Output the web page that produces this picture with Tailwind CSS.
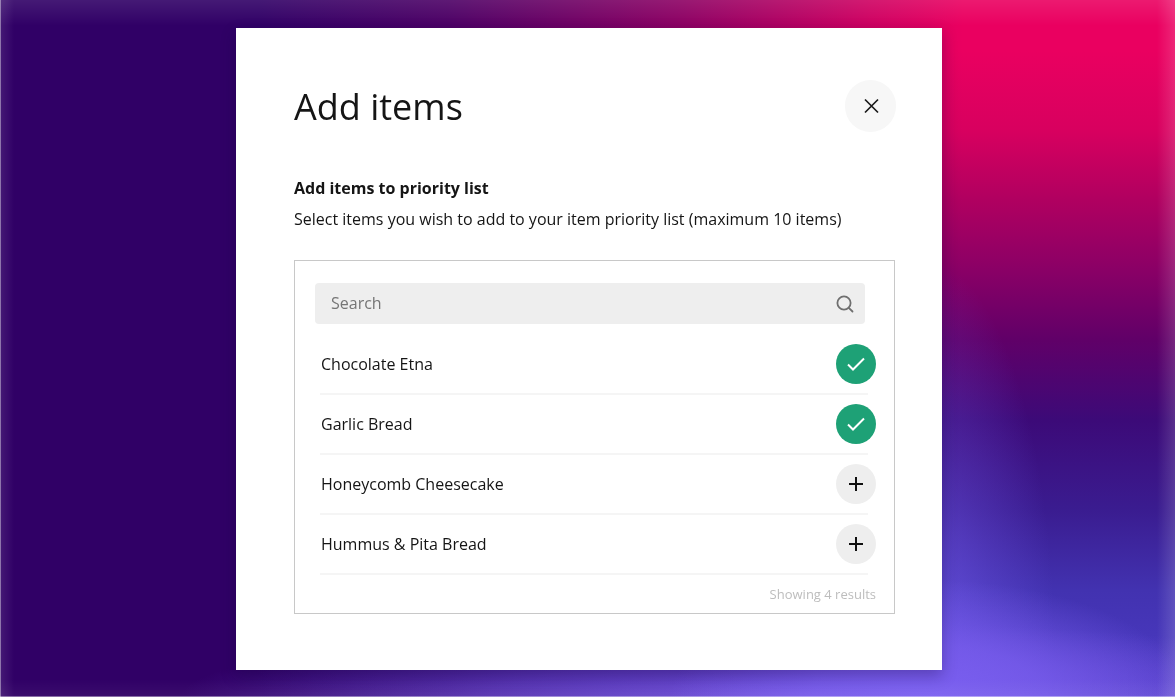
<!DOCTYPE html>
<html lang="en">
<head>
<meta charset="utf-8">
<title>Add items</title>
<script src="https://cdn.jsdelivr.net/npm/@tailwindcss/browser@4"></script>
</head>
<body class="m-0">
<div class="relative w-[1175px] h-[697px] overflow-hidden font-['Open_Sans','Noto_Sans',sans-serif] text-[#151515] bg-[#300066]">
  <div class="absolute inset-0 bg-[radial-gradient(ellipse_260px_120px_at_930px_700px,#7a5ff0_0%,rgba(122,95,240,.7)_45%,rgba(122,95,240,0)_100%),radial-gradient(ellipse_620px_75px_at_800px_697px,rgba(112,80,220,.95)_0%,rgba(112,80,220,.55)_50%,rgba(112,80,220,0)_100%),radial-gradient(ellipse_130px_400px_at_925px_660px,rgba(112,88,232,.75)_0%,rgba(112,88,232,.3)_55%,rgba(112,88,232,0)_100%),linear-gradient(90deg,#300066_0%,#300066_22%,rgba(48,0,102,.85)_38%,rgba(48,0,102,.5)_58%,rgba(48,0,102,.15)_74%,rgba(48,0,102,0)_82%,rgba(48,0,102,0)_100%),linear-gradient(180deg,#ea0060_0px,#ea0060_50px,#d8005f_130px,#b00060_200px,#8a0066_270px,#600068_340px,#3c0a78_420px,#3a1c90_510px,#4232b0_590px,#4c3cc6_697px)]"></div>
  <div class="absolute inset-x-0 top-0 h-[26px] bg-gradient-to-b from-white/10 to-transparent"></div>
  <div class="absolute inset-y-0 left-0 w-[14px] bg-gradient-to-r from-white/10 to-transparent"></div>
  <div class="absolute inset-y-0 right-0 w-[18px] bg-gradient-to-l from-white/15 to-transparent"></div>
  <div class="absolute inset-x-0 bottom-0 h-[18px] bg-gradient-to-t from-white/5 to-transparent"></div>
  <div class="absolute inset-y-0 left-0 w-px bg-white/40"></div>
  <div class="absolute inset-x-0 bottom-0 h-px bg-white/40"></div>

  <div class="absolute left-[236px] top-[28px] w-[706px] h-[642px] bg-white shadow-[0_6px_14px_rgba(20,0,60,.3)]">
    <div class="h-full pl-[58px] pr-[46px] pt-[52px] will-change-[opacity]">
      <div class="flex items-center justify-between h-[52px]">
        <h1 class="text-[36px] leading-[52px] font-normal m-0 translate-y-[1px]">Add items</h1>
        <button class="w-[51px] h-[52px] rounded-full bg-[#f7f7f7] flex items-center justify-center">
          <svg class="translate-x-[0.5px]" width="16" height="16" viewBox="0 0 16 16" fill="none" stroke="#1a1a1a" stroke-width="1.7"><path d="M1.5 1.5 14.5 14.5M14.5 1.5 1.5 14.5"/></svg>
        </button>
      </div>
      <h2 class="mt-[44px] text-[16px] leading-[24px] font-bold">Add items to priority list</h2>
      <p class="mt-[7px] text-[16px] leading-[24px]">Select items you wish to add to your item priority list (maximum 10 items)</p>
      <div class="mt-[29px] w-[601px] h-[354px] border border-[#c8c8c8] pt-[22px] pl-[20px] pr-[18px]">
        <div class="w-[550px] h-[41px] rounded bg-[#eeeeee] flex items-center justify-between pl-[16px] pr-[11px]">
          <span class="text-[16px] leading-[24px] -translate-y-[1px] text-[#757575]">Search</span>
          <svg width="18" height="18" viewBox="0 0 18 18" fill="none" stroke="#6f6f6f" stroke-width="1.8"><circle cx="8" cy="8" r="6.6"/><path d="M12.8 12.8 16.5 16.5" stroke-linecap="round"/></svg>
        </div>
        <ul class="mt-[11px] ml-[5px] w-[548px] list-none p-0">
          <li class="h-[60px] flex items-center border-b-2 border-[#f5f5f5] pl-px relative">
            <span class="text-[16px]">Chocolate Etna</span>
            <span class="absolute left-[516px] top-[9px] w-[40px] h-[40px] rounded-full bg-[#1ea176] flex items-center justify-center">
              <svg width="18" height="14" viewBox="0 0 18 14" fill="none" stroke="#fff" stroke-width="2"><path d="M1 7.5 6 12.5 17 1.5"/></svg>
            </span>
          </li>
          <li class="h-[60px] flex items-center border-b-2 border-[#f5f5f5] pl-px relative">
            <span class="text-[16px]">Garlic Bread</span>
            <span class="absolute left-[516px] top-[9px] w-[40px] h-[40px] rounded-full bg-[#1ea176] flex items-center justify-center">
              <svg width="18" height="14" viewBox="0 0 18 14" fill="none" stroke="#fff" stroke-width="2"><path d="M1 7.5 6 12.5 17 1.5"/></svg>
            </span>
          </li>
          <li class="h-[60px] flex items-center border-b-2 border-[#f5f5f5] pl-px relative">
            <span class="text-[16px]">Honeycomb Cheesecake</span>
            <span class="absolute left-[516px] top-[9px] w-[40px] h-[40px] rounded-full bg-[#eeeeee] flex items-center justify-center">
              <svg width="14" height="14" viewBox="0 0 14 14" fill="none" stroke="#111" stroke-width="2"><path d="M7 0V14M0 7H14"/></svg>
            </span>
          </li>
          <li class="h-[60px] flex items-center border-b-2 border-[#f5f5f5] pl-px relative">
            <span class="text-[16px]">Hummus &amp; Pita Bread</span>
            <span class="absolute left-[516px] top-[9px] w-[40px] h-[40px] rounded-full bg-[#eeeeee] flex items-center justify-center">
              <svg width="14" height="14" viewBox="0 0 14 14" fill="none" stroke="#111" stroke-width="2"><path d="M7 0V14M0 7H14"/></svg>
            </span>
          </li>
        </ul>
        <p class="mt-[10px] text-right text-[13px] leading-[18px] text-[#bdbdbd]">Showing 4 results</p>
      </div>
    </div>
  </div>
</div>
</body>
</html>
